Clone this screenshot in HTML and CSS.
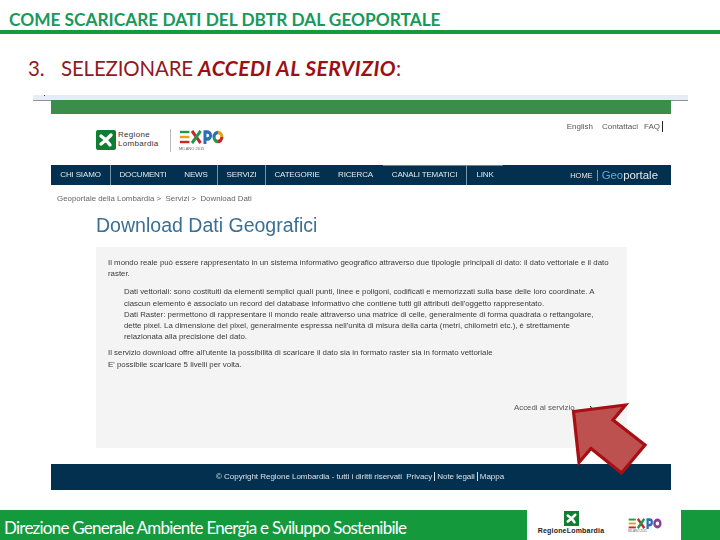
FILE: index.html
```html
<!DOCTYPE html>
<html lang="en">
<head>
    <meta charset="UTF-8">
    <title>Come scaricare dati del DBTR dal Geoportale</title>
    <link rel="stylesheet" href="styles.css">
</head>
<body>
    <div class="slide">
        <h1 class="slide-title">COME SCARICARE DATI DEL DBTR DAL GEOPORTALE</h1>
        <h2 class="step"><span class="step-num">3.</span>SELEZIONARE <b>ACCEDI AL SERVIZIO</b>:</h2>

        <div class="shot">
            <div class="shot-strip"></div>
            <div class="site">
                <div class="site-green"></div>
                <div class="site-head">
                    <div class="logos">
                        <svg class="rl-mark" viewBox="0 0 20 20">
                            <rect width="20" height="20" rx="2" fill="#0f7d32"/>
                            <path d="M5 6l5 4 5-5M10 10l-5 4M10 10l4 5" fill="none" stroke="#fff" stroke-width="3.4" stroke-linecap="round"/>
                        </svg>
                        <div class="rl-name">Regione<br>Lombardia</div>
                        <div class="logo-sep"></div>
                        <div class="expo">
                            <svg class="expo-mark" viewBox="0 0 52 14" preserveAspectRatio="none">
                                <path d="M1 2h11" stroke="#1f9a4d" stroke-width="2.4"/>
                                <path d="M1 7h11" stroke="#e2a21b" stroke-width="2.4"/>
                                <path d="M1 12h11" stroke="#c9252c" stroke-width="2.4"/>
                                <path d="M15 1l10 12" stroke="#c9252c" stroke-width="3.4"/>
                                <path d="M25 1L15 13" stroke="#1f9a4d" stroke-width="3.4"/>
                                <path d="M30 14V2h3a3 3 0 010 7h-3" fill="none" stroke="#2a6fb5" stroke-width="3.4"/>
                                <path d="M45 2.500a4.500 4.500 0 014.500 4.500" fill="none" stroke="#e2a21b" stroke-width="3.600"/>
                                <path d="M49.500 7a4.500 4.500 0 01-4.500 4.500" fill="none" stroke="#c9252c" stroke-width="3.600"/>
                                <path d="M45 11.500a4.500 4.500 0 01-4.500-4.500" fill="none" stroke="#1f9a4d" stroke-width="3.600"/>
                                <path d="M40.500 7a4.500 4.500 0 014.500-4.500" fill="none" stroke="#2a6fb5" stroke-width="3.600"/>
                            </svg>
                            <div class="expo-sub">MILANO 2015</div>
                        </div>
                    </div>
                    <div class="top-links">
                        <span>English</span><span>Contattaci</span><span class="faq">FAQ</span>
                    </div>
                </div>
                <div class="nav">
                    <span class="nav-item w1">CHI SIAMO</span>
                    <span class="nav-item w2">DOCUMENTI</span>
                    <span class="nav-item w3">NEWS</span>
                    <span class="nav-item w4">SERVIZI</span>
                    <span class="nav-item w5">CATEGORIE</span>
                    <span class="nav-item w6">RICERCA</span>
                    <span class="nav-item w7">CANALI TEMATICI</span>
                    <span class="nav-item w8">LINK</span>
                    <span class="nav-right">
                        <span class="nav-home">HOME</span>
                        <span class="nav-geo"><em>Geo</em>portale</span>
                    </span>
                </div>
                <div class="crumbs">Geoportale della Lombardia &gt; &nbsp;Servizi &gt; &nbsp;Download Dati</div>
                <div class="page-title">Download Dati Geografici</div>
                <div class="panel">
                    <p>Il mondo reale può essere rappresentato in un sistema informativo geografico attraverso due tipologie principali di dato: il dato vettoriale e il dato<br>raster.</p>
                    <p class="indent">Dati vettoriali: sono costituiti da elementi semplici quali punti, linee e poligoni, codificati e memorizzati sulla base delle loro coordinate. A<br>ciascun elemento è associato un record del database informativo che contiene tutti gli attributi dell'oggetto rappresentato.<br>Dati Raster: permettono di rappresentare il mondo reale attraverso una matrice di celle, generalmente di forma quadrata o rettangolare,<br>dette pixel. La dimensione del pixel, generalmente espressa nell'unità di misura della carta (metri, chilometri etc.), è strettamente<br>relazionata alla precisione del dato.</p>
                    <p>Il servizio download offre all'utente la possibilità di scaricare il dato sia in formato raster sia in formato vettoriale<br>E' possibile scaricare 5 livelli per volta.</p>
                    <div class="service-link">Accedi al servizio<span class="service-caret">›</span></div>
                </div>
                <div class="site-foot">© Copyright Regione Lombardia - tutti i diritti riservati <span class="foot-link">Privacy</span><span class="foot-link">Note legali</span><span class="foot-link">Mappa</span></div>
            </div>
        </div>

        <div class="slide-foot">
            <div class="foot-text">Direzione Generale Ambiente Energia e Sviluppo Sostenibile</div>
            <div class="foot-logos">
                <div class="foot-rl">
                    <svg class="foot-mark" viewBox="0 0 20 20">
                        <rect width="20" height="20" fill="#0f7d32"/>
                        <path d="M5 6l5 4 5-5M10 10l-5 4M10 10l4 5" fill="none" stroke="#fff" stroke-width="3.4" stroke-linecap="round"/>
                    </svg>
                    <div class="foot-name">RegioneLombardia</div>
                </div>
                <div class="foot-expo">
                    <svg class="foot-expo-mark" viewBox="0 0 52 14" preserveAspectRatio="none">
                        <path d="M1 2h11" stroke="#1f9a4d" stroke-width="2.4"/>
                        <path d="M1 7h11" stroke="#e2a21b" stroke-width="2.4"/>
                        <path d="M1 12h11" stroke="#c9252c" stroke-width="2.4"/>
                        <path d="M15 1l10 12" stroke="#c9252c" stroke-width="3.4"/>
                        <path d="M25 1L15 13" stroke="#1f9a4d" stroke-width="3.4"/>
                        <path d="M30 14V2h3a3 3 0 010 7h-3" fill="none" stroke="#2a6fb5" stroke-width="3.4"/>
                        <circle cx="45" cy="7" r="4.500" fill="none" stroke="#8a3f8f" stroke-width="3.600"/>
                    </svg>
                    <div class="foot-expo-sub">MILANO 2015</div>
                </div>
            </div>
            <div class="foot-end"></div>
        </div>

        <!-- arrow sits over the screenshot -->
        <svg class="arrow" viewBox="0 0 720 540">
            <path d="M573.5 411.5L625.5 405L613 420L645 445L621.5 473L591 448.5L579 462.5Z" fill="#bd5150" stroke="#a80f14" stroke-width="3.2" stroke-linejoin="miter"/>
        </svg>
    </div>
</body>
</html>
```

FILE: styles.css
```css
/* General Body Styling */
body {
    margin: 0;
    background-color: #fff;
    font-family: 'Liberation Sans', Arial, sans-serif;
}

.slide {
    position: relative;
    width: 720px;
    height: 540px;
    overflow: hidden;
    display: flex;
    flex-direction: column;
}

/* Slide heading */
.slide-title {
    margin: 0;
    box-sizing: border-box;
    padding: 10px 0 0 9px;
    border-bottom: 4px solid #149a3c;
    height: 34px;
    font-family: Lato, sans-serif;
    font-size: 17.3px;
    line-height: 20px;
    font-weight: 700;
    color: #18995a;
    white-space: nowrap;
}

.step {
    margin: 21px 0 0 28px;
    height: 26px;
    font-family: Lato, sans-serif;
    font-size: 20.45px;
    letter-spacing: -0.15px;
    line-height: 26px;
    font-weight: 400;
    color: #8f1a1f;
    white-space: nowrap;
}

.step b {
    font-size: 21px;
    letter-spacing: 0.45px;
    font-style: italic;
    font-weight: 700;
    color: #9c0f14;
}

.step-num {
    display: inline-block;
    width: 33px;
}

/* Screenshot */
.shot {
    margin: 14px 0 0 33px;
    width: 655px;
}

.shot-strip {
    position: relative;
    height: 5px;
    background-color: #e6edf6;
    border-bottom: 1px solid #8d9296;
    margin-bottom: -1px;
}

.shot-strip::before {
    content: "";
    position: absolute;
    left: 11px;
    top: 0;
    width: 1px;
    height: 1px;
    background-color: #333;
}

.site {
    position: relative;
    margin-left: 18px;
    width: 620px;
    filter: blur(0.35px);
}

.site-green {
    height: 14px;
    background-color: #3b8e49;
}

.site-head {
    height: 51px;
    display: flex;
    justify-content: space-between;
    background-color: #fff;
}

.logos {
    display: flex;
    align-items: flex-start;
    padding: 15px 0 0 45px;
}

.rl-mark {
    width: 20px;
    height: 20px;
    margin-top: 1px;
}

.rl-name {
    margin-left: 2px;
    margin-top: 2px;
    width: 52px;
    font-size: 8px;
    line-height: 8.5px;
    letter-spacing: 0.3px;
    color: #333;
}

.logo-sep {
    width: 1px;
    height: 23px;
    margin-right: 8px;
    background-color: #bbb;
}

.expo-mark {
    display: block;
    width: 45px;
    height: 14px;
    margin-top: 1px;
}

.expo-sub {
    margin-top: 2px;
    font-size: 4px;
    color: #666;
}

.top-links {
    display: flex;
    gap: 9px;
    padding: 7px 8px 0 0;
    font-size: 8px;
    line-height: 11px;
    height: 11px;
    color: #555;
}

.faq {
    margin-left: -3px;
    padding-right: 2px;
    border-right: 1px solid #222;
}

/* Nav */
.nav {
    height: 20px;
    display: flex;
    align-items: stretch;
    background-color: #03304f;
    font-size: 8px;
    letter-spacing: -0.15px;
    line-height: 20px;
    color: #e4e9ee;
    white-space: nowrap;
}

.nav-item {
    box-sizing: border-box;
    text-align: center;
}

.w1 { width: 60px; border-right: 1px solid #7b97ab; }
.w2 { width: 64px; }
.w3 { width: 43px; border-right: 1px solid #7b97ab; }
.w4 { width: 48px; border-right: 1px solid #7b97ab; }
.w5 { width: 62px; }
.w6 { width: 55px; }
.w7 { width: 84px; border-right: 1px solid #7b97ab; box-shadow: inset 0 1px 0 #6d8496; }
.w8 { width: 36px; box-shadow: inset 0 1px 0 #6d8496; }

.nav-right {
    margin-left: auto;
    display: flex;
    align-items: center;
    padding-right: 13px;
}

.nav-home {
    padding-right: 4px;
    border-right: 1px solid #7b97ab;
    line-height: 11px;
    font-size: 7.5px;
    letter-spacing: 0;
}

.nav-geo {
    margin-left: 4px;
    font-size: 11.4px;
    letter-spacing: 0;
}

.nav-geo em {
    font-style: normal;
    color: #5fa8de;
}

.crumbs {
    height: 12px;
    margin: 8px 0 0 6px;
    font-size: 7.9px;
    line-height: 12px;
    color: #666;
    white-space: nowrap;
}

.page-title {
    margin: 9px 0 0 45px;
    height: 22px;
    font-size: 19.55px;
    line-height: 22px;
    color: #3b6f93;
    white-space: nowrap;
}

/* Grey panel */
.panel {
    position: relative;
    margin: 11px 0 0 45px;
    width: 531px;
    height: 201px;
    box-sizing: border-box;
    padding: 10px 0 0 12px;
    background-color: #f4f4f4;
    font-size: 7.85px;
    line-height: 11.2px;
    color: #3a3a3a;
    white-space: nowrap;
}

.panel p {
    margin: 0 0 7px 0;
}

.panel .indent {
    margin: 0 0 5px 16px;
}

.service-link {
    position: absolute;
    left: 418px;
    top: 155px;
    color: #555;
}

.service-caret {
    margin-left: 15px;
    font-weight: 700;
    color: #111;
}

.site-foot {
    margin-top: 16px;
    height: 26px;
    background-color: #03304f;
    font-size: 8px;
    letter-spacing: -0.03px;
    line-height: 26px;
    color: #d9e0e6;
    padding-left: 165px;
    box-sizing: border-box;
    white-space: nowrap;
}

.foot-link {
    margin-left: 2px;
    padding-right: 2px;
    border-right: 1px solid #d9e0e6;
}

.foot-link:last-child {
    border-right: none;
}

/* Slide footer */
.slide-foot {
    margin-top: 20px;
    height: 30px;
    display: flex;
}

.foot-text {
    width: 527px;
    box-sizing: border-box;
    padding-left: 4px;
    background-color: #149a3c;
    font-family: Lato, sans-serif;
    font-size: 17px;
    letter-spacing: -0.76px;
    line-height: 35px;
    color: #fff;
    white-space: nowrap;
}

.foot-logos {
    width: 154px;
    display: flex;
    background-color: #fff;
}

.foot-rl {
    width: 88px;
    margin-right: 13px;
    text-align: center;
}

.foot-mark {
    display: block;
    width: 15px;
    height: 15px;
    margin: 1px auto 0;
}

.foot-name {
    font-size: 7px;
    line-height: 9px;
    letter-spacing: 0.2px;
    font-weight: 700;
    color: #222;
}

.foot-expo {
    padding-top: 8px;
}

.foot-expo-mark {
    display: block;
    width: 34px;
    height: 11px;
}

.foot-expo-sub {
    font-size: 3px;
    color: #666;
}

.foot-end {
    flex: 1;
    background-color: #149a3c;
}

/* Red arrow */
.arrow {
    position: absolute;
    left: 0;
    top: 0;
    width: 720px;
    height: 540px;
}
```
